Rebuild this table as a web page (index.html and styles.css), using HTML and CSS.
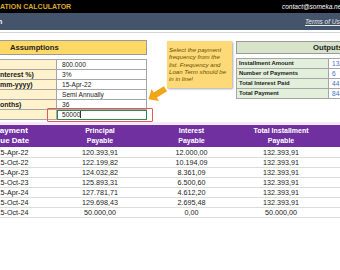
FILE: index.html
```html
<!DOCTYPE html>
<html lang="en">
<head>
    <meta charset="UTF-8">
    <meta name="viewport" content="width=device-width, initial-scale=1.0">
    <title>Loan Amortization Calculator</title>
    <link rel="stylesheet" href="styles.css">
</head>
<body>
    <div class="sheet">
        <div class="topbar">
            <span class="app-title">ATION CALCULATOR</span>
            <span class="contact">contact@someka.net</span>
        </div>
        <div class="subbar">
            <span class="sub-left">n</span>
            <span class="terms">Terms of Use</span>
        </div>
        <div class="rule"></div>

        <div class="inputs-area">
            <section class="assumptions">
                <div class="assum-head">Assumptions</div>
                <div class="assum-grid">
                    <div class="lbl"></div><div class="val">800.000</div>
                    <div class="lbl">nterest %)</div><div class="val">3%</div>
                    <div class="lbl">mm-yyyy)</div><div class="val">15-Apr-22</div>
                    <div class="lbl"></div><div class="val">Semi Annually</div>
                    <div class="lbl">onths)</div><div class="val">36</div>
                    <div class="lbl"></div><div class="val active">50000<span class="caret"></span></div>
                </div>
            </section>

            <section class="outputs">
                <div class="out-head">Outputs</div>
                <div class="out-grid">
                    <div class="olbl">Installment Amount</div><div class="oval">132.393,91</div>
                    <div class="olbl">Number of Payments</div><div class="oval">6</div>
                    <div class="olbl">Total Interest Paid</div><div class="oval">44.363,46</div>
                    <div class="olbl">Total Payment</div><div class="oval">844.363,46</div>
                </div>
            </section>

            <!-- floating shapes over the sheet -->
            <div class="note">Select the payment<br>frequency from the<br>list. Frequency and<br>Loan Term should be<br>in in line!</div>
            <svg class="arrow" width="22" height="18" viewBox="0 0 22 18">
                <polygon transform="rotate(-32 11 9)" points="1,9 9,2 9,6 21,6 21,12 9,12 9,16" fill="#f2a516"/>
            </svg>
            <div class="highlight"></div>
        </div>

        <div class="band"></div>

        <div class="schedule">
            <div class="sched-head">
                <div class="first"><span>Payment</span><span>Due Date</span></div>
                <div>Principal<br>Payable</div>
                <div>Interest<br>Payable</div>
                <div>Total Installment<br>Payable</div>
                <div></div>
            </div>
            <div class="sched-body">
                <div class="sched-row"><div class="first">15-Apr-22</div><div>120.393,91</div><div>12.000,00</div><div>132.393,91</div><div></div></div>
                <div class="sched-row"><div class="first">15-Oct-22</div><div>122.199,82</div><div>10.194,09</div><div>132.393,91</div><div></div></div>
                <div class="sched-row"><div class="first">15-Apr-23</div><div>124.032,82</div><div>8.361,09</div><div>132.393,91</div><div></div></div>
                <div class="sched-row"><div class="first">15-Oct-23</div><div>125.893,31</div><div>6.500,60</div><div>132.393,91</div><div></div></div>
                <div class="sched-row"><div class="first">15-Apr-24</div><div>127.781,71</div><div>4.612,20</div><div>132.393,91</div><div></div></div>
                <div class="sched-row"><div class="first">15-Oct-24</div><div>129.698,43</div><div>2.695,48</div><div>132.393,91</div><div></div></div>
                <div class="sched-row"><div class="first">15-Oct-24</div><div>50.000,00</div><div>0,00</div><div>50.000,00</div><div></div></div>
            </div>
        </div>
    </div>
</body>
</html>
```

FILE: styles.css
```css
body {
    margin: 0;
    padding: 0;
    background-color: #fff;
}
.sheet {
    width: 340px;
    height: 270px;
    overflow: hidden;
    background: #fff;
    font-family: "Liberation Sans", Arial, sans-serif;
    color: #1a1a1a;
}
.topbar {
    height: 13px;
    background-color: #000;
    display: flex;
    align-items: center;
    overflow: hidden;
    white-space: nowrap;
}
.app-title {
    flex: none;
    width: 282px;
    color: #dcaa2a;
    font-weight: bold;
    font-size: 7px;
}
.contact {
    color: #fff;
    font-style: italic;
    font-size: 6.5px;
}
.subbar {
    height: 17px;
    background-color: #44546a;
    display: flex;
    align-items: center;
    overflow: hidden;
    white-space: nowrap;
}
.sub-left {
    flex: none;
    width: 307px;
    margin-left: -2px;
    color: #fff;
    font-weight: bold;
    font-size: 7px;
}
.terms {
    color: #e8e8e8;
    font-style: italic;
    font-size: 6.5px;
    text-decoration: underline;
}
.rule {
    height: 2px;
    border-bottom: 1px solid #d4d4d4;
}

/* Inputs / outputs block */
.inputs-area {
    position: relative;
    height: 89px;
    display: flex;
}
.assumptions {
    flex: none;
    width: 147px;
    margin-top: 7px;
}
.assum-head {
    height: 15px;
    box-sizing: border-box;
    background-color: #ffd966;
    border: 1px solid #9a9a9a;
    border-left: none;
    display: flex;
    align-items: center;
    padding-left: 10px;
    font-weight: bold;
    font-size: 7.7px;
    color: #1f1f1f;
}
.assum-grid {
    margin-top: 4px;
    display: grid;
    grid-template-columns: 57px 90px;
    grid-auto-rows: 10px;
    border-top: 1px solid #a6a6a6;
}
.assum-grid > div {
    box-sizing: border-box;
    border-right: 1px solid #a6a6a6;
    border-bottom: 1px solid #a6a6a6;
    line-height: 9px;
    white-space: nowrap;
    overflow: hidden;
}
.lbl {
    background-color: #fff2cc;
    font-weight: bold;
    font-size: 7px;
}
.val {
    font-size: 6.6px;
    padding-left: 5px;
}
.val.active {
    outline: 1px solid #2f8a4f;
    outline-offset: -1px;
    overflow: visible;
}
.caret {
    display: inline-block;
    width: 1px;
    height: 7px;
    background: #333;
    vertical-align: -1px;
}
.outputs {
    flex: none;
    width: 110px;
    margin-left: 89px;
    margin-top: 8px;
}
.out-head {
    height: 13px;
    box-sizing: border-box;
    background-color: #d7e4c9;
    border: 1px solid #9a9a9a;
    border-right: none;
    display: flex;
    align-items: center;
    padding-left: 76px;
    white-space: nowrap;
    font-weight: bold;
    font-size: 7.7px;
    color: #1f1f1f;
}
.out-grid {
    margin-top: 4px;
    display: grid;
    grid-template-columns: 92px 30px;
    grid-auto-rows: 10px;
    border-top: 1px solid #a6a6a6;
    border-left: 1px solid #a6a6a6;
}
.out-grid > div {
    box-sizing: border-box;
    border-right: 1px solid #a6a6a6;
    border-bottom: 1px solid #a6a6a6;
    line-height: 9px;
    white-space: nowrap;
    overflow: hidden;
}
.olbl {
    background-color: #e2efda;
    font-weight: bold;
    font-size: 5.9px;
    padding-left: 2px;
}
.oval {
    color: #4472c4;
    font-size: 6.6px;
    padding-left: 3px;
}
.note {
    position: absolute;
    left: 167px;
    top: 8px;
    width: 65px;
    height: 47px;
    box-sizing: border-box;
    padding: 5px 2px 0;
    background-color: #fdd977;
    box-shadow: 1px 1px 2px rgba(0, 0, 0, 0.35);
    color: #6b5000;
    font-style: italic;
    font-size: 6.1px;
    line-height: 7.3px;
    white-space: nowrap;
}
.arrow {
    position: absolute;
    left: 146px;
    top: 52px;
}
.highlight {
    position: absolute;
    left: 47px;
    top: 75px;
    width: 106px;
    height: 14px;
    box-sizing: border-box;
    border: 1.5px solid #e05a5a;
    border-radius: 1px;
}
.band {
    height: 3px;
    background-color: #f7e8f7;
}

/* Payment schedule */
.sched-head,
.sched-row {
    display: grid;
    grid-template-columns: 55px 90px 93px 86px 1fr;
    text-align: center;
    white-space: nowrap;
}
.sched-head {
    height: 22px;
    align-items: center;
    background-color: #7030a0;
    color: #fff;
    font-weight: bold;
    font-size: 7px;
    line-height: 10px;
}
.sched-head .first {
    text-align: left;
    font-size: 8px;
}
.sched-head .first span {
    display: block;
    margin-left: -5.5px;
}
.sched-body {
    padding-top: 1px;
}
.sched-row {
    height: 10px;
    box-sizing: border-box;
    border-bottom: 1px solid #dcdcdc;
    font-size: 7.2px;
    line-height: 9px;
}
.sched-row .first {
    text-align: left;
    text-indent: -3.5px;
}
```
